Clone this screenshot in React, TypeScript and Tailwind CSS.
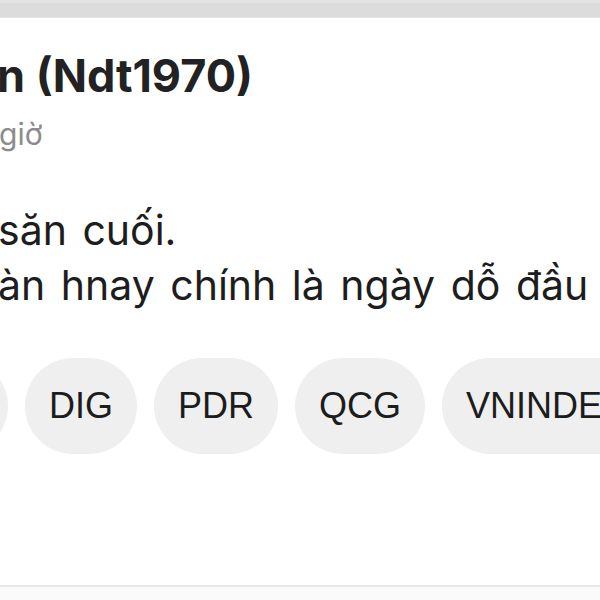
const tickers = ['HPG', 'DIG', 'PDR', 'QCG', 'VNINDEX'];

export default function App() {
  return (
    <div className="w-[600px] h-[600px] overflow-hidden bg-white flex flex-col font-['Liberation_Sans',Arial,sans-serif] text-[#1d1d1d]">
      {/* top strip of the previous card */}
      <div className="h-[18px] shrink-0 bg-[#dcdcdc] border-t-[3px] border-[#e3e3e3] border-b border-b-[#e6e6e6]" />

      <div className="flex flex-col flex-1 overflow-hidden">
        <h1 className="mt-[31px] -ml-[3px] whitespace-nowrap text-[45px] leading-[54px] font-bold text-[#222] font-['Inter',sans-serif]">
          n (Ndt1970)
        </h1>
        <p className="mt-[13px] -ml-[1px] whitespace-nowrap text-[30px] leading-[36px] text-[#8c8c8c] font-['Inter',sans-serif]">giờ</p>

        <div className="mt-[51px] -ml-[2px] whitespace-nowrap text-[41px] leading-[55px] [word-spacing:4px] font-['Inter',sans-serif]">
          <p>săn cuối.</p>
          <p>àn hnay chính là ngày dỗ đầu</p>
        </div>

        <div className="mt-[45px] flex gap-[17px] whitespace-nowrap -ml-[118px]">
          {tickers.map((t) => (
            <span
              key={t}
              className="shrink-0 h-[96px] px-6 rounded-full bg-[#efefef] flex items-center text-[36px] text-[#1c1c1c]"
            >
              {t}
            </span>
          ))}
        </div>

        <div className="mt-auto h-[2px] bg-[#e8e8e8]" />
        <div className="h-[13px] bg-[#fafafa]" />
      </div>
    </div>
  );
}
